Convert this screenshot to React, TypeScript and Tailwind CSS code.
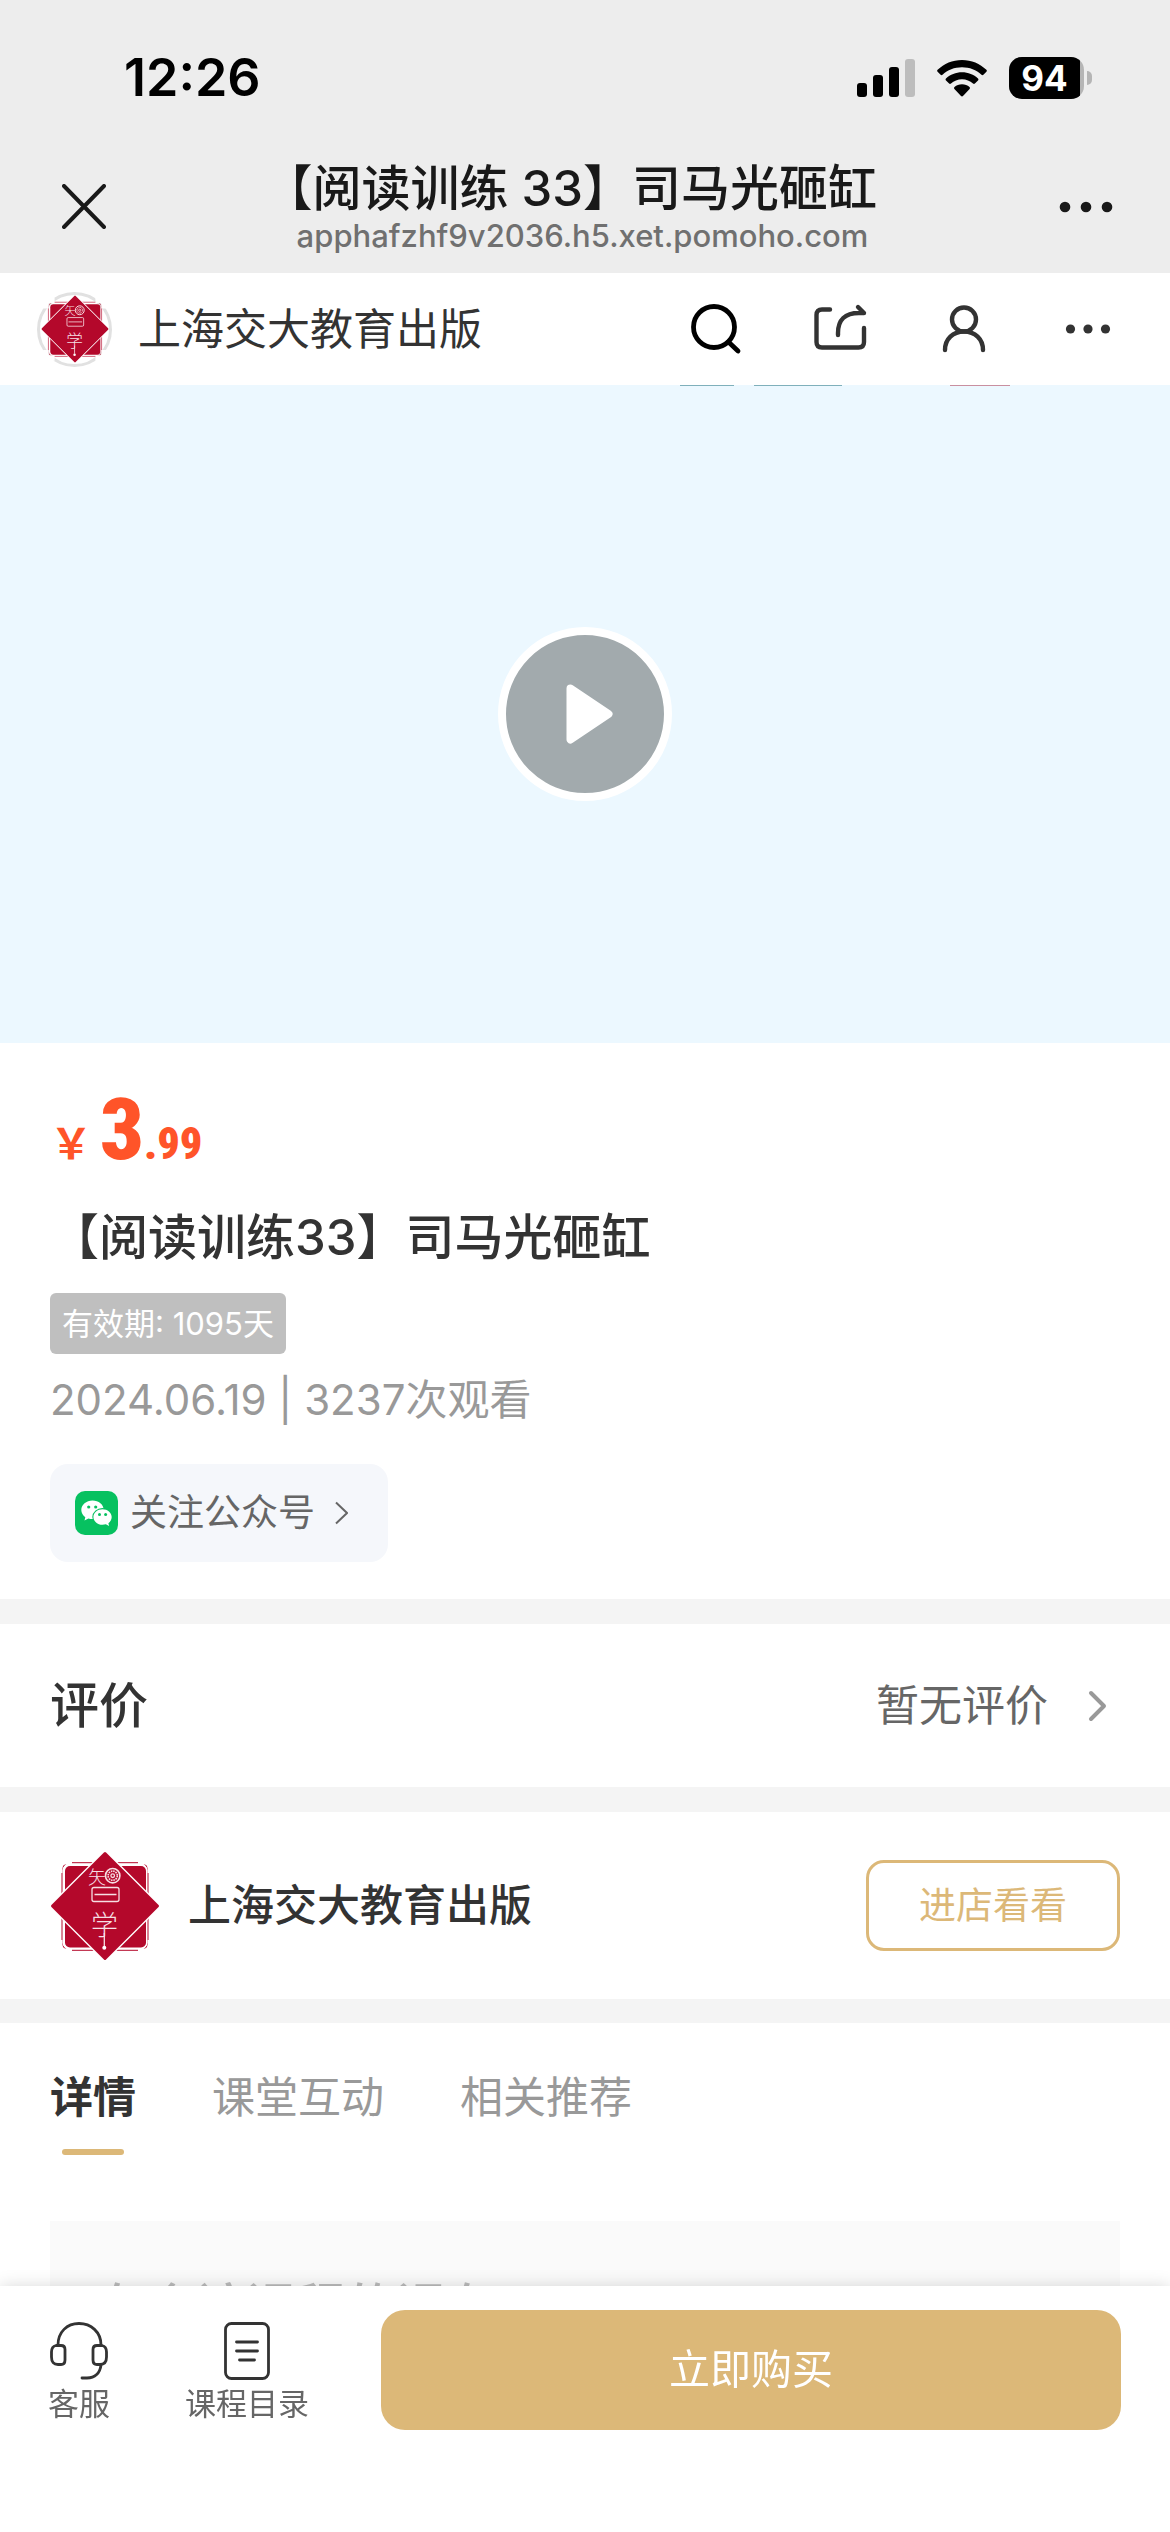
import React, { useState } from 'react';

const SHOP_NAME = '上海交大教育出版';
const TABS = ['详情', '课堂互动', '相关推荐'];

const ShopLogo: React.FC<{ className?: string }> = ({ className }) => (
  <svg viewBox="0 0 110 110" className={className} aria-hidden="true">
    <rect x="12" y="11.7" width="86" height="87.6" rx="8" fill="none" stroke="#b4082b" strokeWidth="1" />
    <path d="M8 22V9H22M88 9H102V22M102 89V102H88M22 102H8V89" fill="none" stroke="#fff" strokeWidth="9" />
    <rect x="15" y="15" width="81" height="81.5" rx="5" fill="#b4082b" />
    <path d="M55 2 108 55 55 108 2 55Z" fill="#b4082b" stroke="#fff" strokeWidth="5" strokeLinejoin="round" />
    <path d="M55 2.500 107.500 55 55 107.500 2.500 55Z" fill="#b4082b" stroke="#b4082b" strokeWidth="3" strokeLinejoin="round" />
    <g fill="none" stroke="#f6dfe3" strokeWidth="1.3">
      <circle cx="62.7" cy="24.7" r="7.2" strokeWidth="1.6" />
      <circle cx="62.7" cy="24.7" r="4.6" strokeWidth="1.6" strokeDasharray="1.6 0.8" />
      <circle cx="62.7" cy="24.7" r="1.8" />
      <rect x="42" y="36.5" width="27" height="14" rx="2" />
      <path d="M44.500 43.500H66.500M54.300 82V95" />
    </g>
    <circle cx="54.300" cy="96.700" r="2" fill="#fff" />
    <text x="38" y="33" fontSize="18" fill="#f6dfe3" className="font-['Noto_Sans_CJK_SC',sans-serif] font-light">矢</text>
    <text x="41" y="84" fontSize="27" fill="#f6dfe3" className="font-['Noto_Sans_CJK_SC',sans-serif] font-light">学</text>
  </svg>
);

const StatusBar: React.FC = () => (
  <div className="flex h-[156px] items-center justify-between pr-[78px] pl-[124px]">
    <span className="text-[52px] leading-[60px] font-semibold text-black">12:26</span>
    <div className="flex items-center gap-[22px]">
      <svg viewBox="0 0 58 38" className="h-[38px] w-[58px]" aria-hidden="true">
        <rect x="0" y="24" width="10" height="14" rx="3" />
        <rect x="16" y="16" width="10" height="22" rx="3" />
        <rect x="32" y="8" width="10" height="30" rx="3" />
        <rect x="48" y="0" width="10" height="38" rx="3" fill="#bdbdbd" />
      </svg>
      <svg viewBox="0 0 50 37" className="h-[37px] w-[50px]" aria-hidden="true">
        <path d="M25 0C15.500 0 7 3.700.6 9.800c-.6.600-.6 1.400 0 2l3 3c.5.500 1.300.500 1.900 0C10.600 10 17.400 7.300 25 7.300s14.400 2.700 19.500 7.500c.6.500 1.400.500 1.900 0l3-3c.6-.6.6-1.400 0-2C43 3.700 34.500 0 25 0Z" />
        <path d="M25 12.300c-6.200 0-11.800 2.300-16 6.200-.6.500-.6 1.400 0 1.900l3.100 3.100c.5.500 1.300.500 1.900 0 2.900-2.600 6.800-4.200 11-4.200s8.100 1.600 11 4.200c.6.500 1.400.500 1.900 0l3.100-3.100c.6-.5.6-1.400 0-1.900-4.200-3.900-9.800-6.200-16-6.200Z" />
        <path d="M25 24.300c-2.900 0-5.500 1-7.500 2.700-.6.500-.6 1.300-.1 1.900l6.600 7.200c.5.600 1.500.600 2 0l6.600-7.200c.5-.6.500-1.400-.1-1.900-2-1.700-4.600-2.700-7.500-2.700Z" />
      </svg>
      <div className="flex items-center gap-[3px]">
        <div className="overflow-hidden rounded-[13px] bg-[#b5b5b5] pr-1">
          <div className="flex h-[42px] w-[71px] items-center justify-center bg-black text-[35px] leading-[42px] font-bold text-white">94</div>
        </div>
        <div className="h-[14px] w-[5px] rounded-r-full bg-[#b5b5b5]" />
      </div>
    </div>
  </div>
);

const BrowserBar: React.FC = () => (
  <div className="flex h-[117px] items-center justify-between pr-[57px] pb-4 pl-[62px]">
    <button type="button" aria-label="关闭">
      <svg viewBox="0 0 44 45" className="h-[45px] w-[44px]" fill="none" stroke="#191919" strokeWidth="4" strokeLinecap="round">
        <path d="M2 2 42 43M42 2 2 43" />
      </svg>
    </button>
    <div className="text-center">
      <h1 className="text-[49px] leading-[58px] font-medium text-[#191919] [text-spacing-trim:trim-start]">【阅读训练 33】司马光砸缸</h1>
      <p className="text-[31px] leading-9 font-medium text-[#707070]">apphafzhf9v2036.h5.xet.pomoho.com</p>
    </div>
    <button type="button" aria-label="更多">
      <svg viewBox="0 0 54 12" className="h-3 w-[54px]" fill="#191919">
        <circle cx="6" cy="6" r="5.300" />
        <circle cx="27" cy="6" r="5.300" />
        <circle cx="48" cy="6" r="5.300" />
      </svg>
    </button>
  </div>
);

const ShopBar: React.FC = () => (
  <header className="flex h-[112px] items-center justify-between bg-white pr-[52px] pl-[37px]">
    <div className="flex items-center gap-[26px]">
      <span className="flex size-[75px] items-center justify-center rounded-full border-[3px] border-[#e1e1e1] bg-white">
        <ShopLogo className="size-[68px]" />
      </span>
      <span className="text-[43px] leading-[60px] text-[#333]">{SHOP_NAME}</span>
    </div>
    <nav className="flex items-center gap-16">
      <button type="button" aria-label="搜索">
        <svg viewBox="0 0 60 60" className="size-[60px]" fill="none" stroke="#000" strokeWidth="4.800" strokeLinecap="round">
          <circle cx="28" cy="28" r="20.500" />
          <path d="M42.500 43 52 52" />
        </svg>
      </button>
      <button type="button" aria-label="分享">
        <svg viewBox="0 0 60 60" className="size-[60px]" fill="none" stroke="#333" strokeWidth="4.400" strokeLinecap="round" strokeLinejoin="round">
          <path d="M20 10.500H12Q6.500 10.500 6.500 16V43Q6.500 48.500 12 48.500H48.500Q54 48.500 54 43V29" />
          <path d="M28 36V34Q28 14 49 14H54L48 8" />
        </svg>
      </button>
      <button type="button" aria-label="我的">
        <svg viewBox="0 0 60 60" className="size-[60px]" fill="none" stroke="#333" strokeWidth="4.400" strokeLinecap="round">
          <circle cx="30" cy="20.500" r="12" />
          <path d="M11 51C11 40 19 32.500 30 32.500S49 40 49 51" />
        </svg>
      </button>
      <button type="button" aria-label="菜单">
        <svg viewBox="0 0 60 60" className="size-[60px]" fill="#333">
          <circle cx="12.500" cy="30" r="4.600" />
          <circle cx="30" cy="30" r="4.600" />
          <circle cx="47.500" cy="30" r="4.600" />
        </svg>
      </button>
    </nav>
  </header>
);

const VideoCover: React.FC = () => (
  <section className="relative flex h-[658px] items-center justify-center bg-[#ecf8ff]">
    <svg viewBox="0 0 1170 1" preserveAspectRatio="none" className="absolute inset-x-0 top-0 h-px w-full" aria-hidden="true">
      <rect x="680" width="54" height="1" fill="#7fb0bb" />
      <rect x="754" width="88" height="1" fill="#7fb0bb" />
      <rect x="950" width="60" height="1" fill="#c98fa0" />
    </svg>
    <button type="button" aria-label="播放" className="flex size-[174px] items-center justify-center rounded-full border-8 border-white bg-[#a2aaad]">
      <svg viewBox="0 0 47 60" className="ml-2 h-[60px] w-[47px]" fill="#fff" stroke="#fff" strokeWidth="8" strokeLinejoin="round">
        <path d="M4.500 4.500 42.500 30 4.500 55.500Z" />
      </svg>
    </button>
  </section>
);

const CourseInfo: React.FC = () => (
  <section className="bg-white px-[50px] pt-[42px] pb-[37px]">
    <p className="flex h-[90px] items-baseline font-['Liberation_Sans_Narrow','Roboto_Condensed','Liberation_Sans',sans-serif] leading-[90px] font-black text-[#ff5429]">
      <span className="w-[50px] font-['Noto_Sans_CJK_SC',sans-serif] text-[42px] leading-none font-bold">￥</span>
      <span className="text-[86px]">3</span>
      <span className="text-[44px]">.99</span>
    </p>
    <h2 className="mt-[33px] text-[49px] leading-[60px] font-medium text-[#333]">【阅读训练33】司马光砸缸</h2>
    <div className="mt-[25px] flex">
      <span className="rounded-md bg-[#bfbfbf] px-3 text-[31px] leading-[61px] text-white">有效期: 1095天</span>
    </div>
    <p className="mt-4 text-[42px] leading-[60px] text-[#999]">2024.06.19 | 3237次观看</p>
    <button type="button" className="mt-[34px] flex h-[98px] items-center rounded-[18px] bg-[#f5f7fb] pr-10 pl-[25px]">
      <svg viewBox="0 0 43 44" className="h-11 w-[43px]" aria-hidden="true">
        <rect width="43" height="44" rx="10" fill="#07c160" />
        <path d="M17.500 9.500C11.300 9.500 6.300 13.800 6.300 19c0 2.900 1.600 5.400 4 7.200l-.8 3.300 3.900-2.100c1.300.400 2.700.600 4.100.600 6.200 0 11.200-4.100 11.200-9.200s-5-9.300-11.200-9.300Z" fill="#fff" />
        <ellipse cx="27.500" cy="26" rx="10.200" ry="8.900" fill="#07c160" />
        <path d="M27.500 18.200c-5 0-9.100 3.500-9.100 7.800s4.100 7.800 9.100 7.800c1.200 0 2.300-.2 3.400-.5l3.200 1.700-.7-2.700c2-1.500 3.300-3.700 3.300-6.300 0-4.300-4.200-7.800-9.200-7.800Z" fill="#fff" />
        <g fill="#07c160">
          <circle cx="13.700" cy="16" r="1.600" />
          <circle cx="20.700" cy="16" r="1.600" />
          <circle cx="24.500" cy="23.500" r="1.500" />
          <circle cx="30.600" cy="23.500" r="1.500" />
        </g>
      </svg>
      <span className="ml-3 text-[37px] text-[#666]">关注公众号</span>
      <svg viewBox="0 0 13 24" className="ml-5 h-6 w-[13px]" fill="none" stroke="#666" strokeWidth="2">
        <path d="M1 1.500 12 12 1 22.500" />
      </svg>
    </button>
  </section>
);

export default function App() {
  const [activeTab, setActiveTab] = useState('详情');

  return (
    <div className="flex h-screen flex-col bg-white font-['Inter','Noto_Sans_CJK_SC',sans-serif]">
      <div className="shrink-0 bg-[#ededed]">
        <StatusBar />
        <BrowserBar />
      </div>

      <main className="flex-1 overflow-y-auto bg-[#f4f4f4] [scrollbar-width:none]">
        <ShopBar />
        <VideoCover />
        <CourseInfo />

        <section className="mt-[25px] flex h-[163px] items-center justify-between bg-white pr-[62px] pl-[50px]">
          <h3 className="text-[49px] font-medium text-[#333]">评价</h3>
          <a href="#reviews" className="flex items-center gap-10 text-[43px] text-[#666]">
            暂无评价
            <svg viewBox="0 0 20 32" className="h-8 w-5" fill="none" stroke="#999" strokeWidth="4" strokeLinecap="round" strokeLinejoin="round">
              <path d="M3 3 16 16 3 29" />
            </svg>
          </a>
        </section>

        {/* Shop */}
        <section className="mt-[25px] flex h-[187px] items-center justify-between bg-white px-[50px]">
          <div className="flex items-center gap-7">
            <ShopLogo className="size-[110px]" />
            <h3 className="text-[43px] font-medium text-[#333]">{SHOP_NAME}</h3>
          </div>
          <button type="button" className="h-[91px] rounded-[18px] border-[3px] border-[#dcb878] px-[50px] text-[37px] text-[#dcb878]">进店看看</button>
        </section>

        {/* Tabs */}
        <section className="mt-6 bg-white px-[50px] pt-11">
          <div className="flex gap-[76px]" role="tablist">
            {TABS.map((tab) => (
              <button
                key={tab}
                type="button"
                role="tab"
                aria-selected={tab === activeTab}
                onClick={() => setActiveTab(tab)}
                className={`flex flex-col items-center gap-[22px] text-[43px] leading-[60px] ${tab === activeTab ? 'font-bold text-[#333]' : 'text-[#999]'}`}
              >
                {tab}
                {tab === activeTab && <span className="h-[6px] w-[62px] rounded-full bg-[#dcb878]" />}
              </button>
            ))}
          </div>
          <div className="mt-[66px] bg-[#fafafa] px-[46px] pt-[54px] pb-16 text-[50px] leading-[64px] font-medium text-[#bbb]">
            在会该课程的课有
          </div>
        </section>
      </main>

      <footer className="relative flex shrink-0 items-start bg-white pt-6 pr-[49px] pb-[102px] pl-12 shadow-[0_0_16px_rgba(0,0,0,0.15)]">
        <button type="button" className="flex flex-col items-center pt-3 text-[31px] leading-[48px] text-[#666]">
          <svg viewBox="0 0 58 58" className="size-[58px]" fill="none" stroke="#333" strokeWidth="2.800" strokeLinecap="round">
            <path d="M8 23C8 10 17 1.500 29 1.500S51 10 51 23" />
            <path d="M6 23.500H11Q15 23.500 15 27.500V38Q15 42.500 11 42.500H8Q1.500 42.500 1.500 35V30Q1.500 24.500 6 23.500Z" />
            <path d="M52 23.500H47Q43 23.500 43 27.500V38Q43 42.500 47 42.500H50Q56.500 42.500 56.500 35V30Q56.500 24.500 52 23.500Z" />
            <path d="M51 43C50 51 45 56 37 56H32" />
          </svg>
          客服
        </button>
        <button type="button" className="ml-[75px] flex flex-col items-center pt-3 text-[31px] leading-[48px] text-[#666]">
          <svg viewBox="0 0 58 58" className="size-[58px]" fill="none" stroke="#333" strokeWidth="2.800" strokeLinecap="round">
            <rect x="7.500" y="1.500" width="43" height="55" rx="6" />
            <path d="M18.500 20H39.500M18.500 29H39.500M21.500 38H36.500" />
          </svg>
          课程目录
        </button>
        <button type="button" className="ml-[72px] h-[120px] flex-1 rounded-3xl bg-[#dcb878] text-[41px] text-white">立即购买</button>
      </footer>
    </div>
  );
}
